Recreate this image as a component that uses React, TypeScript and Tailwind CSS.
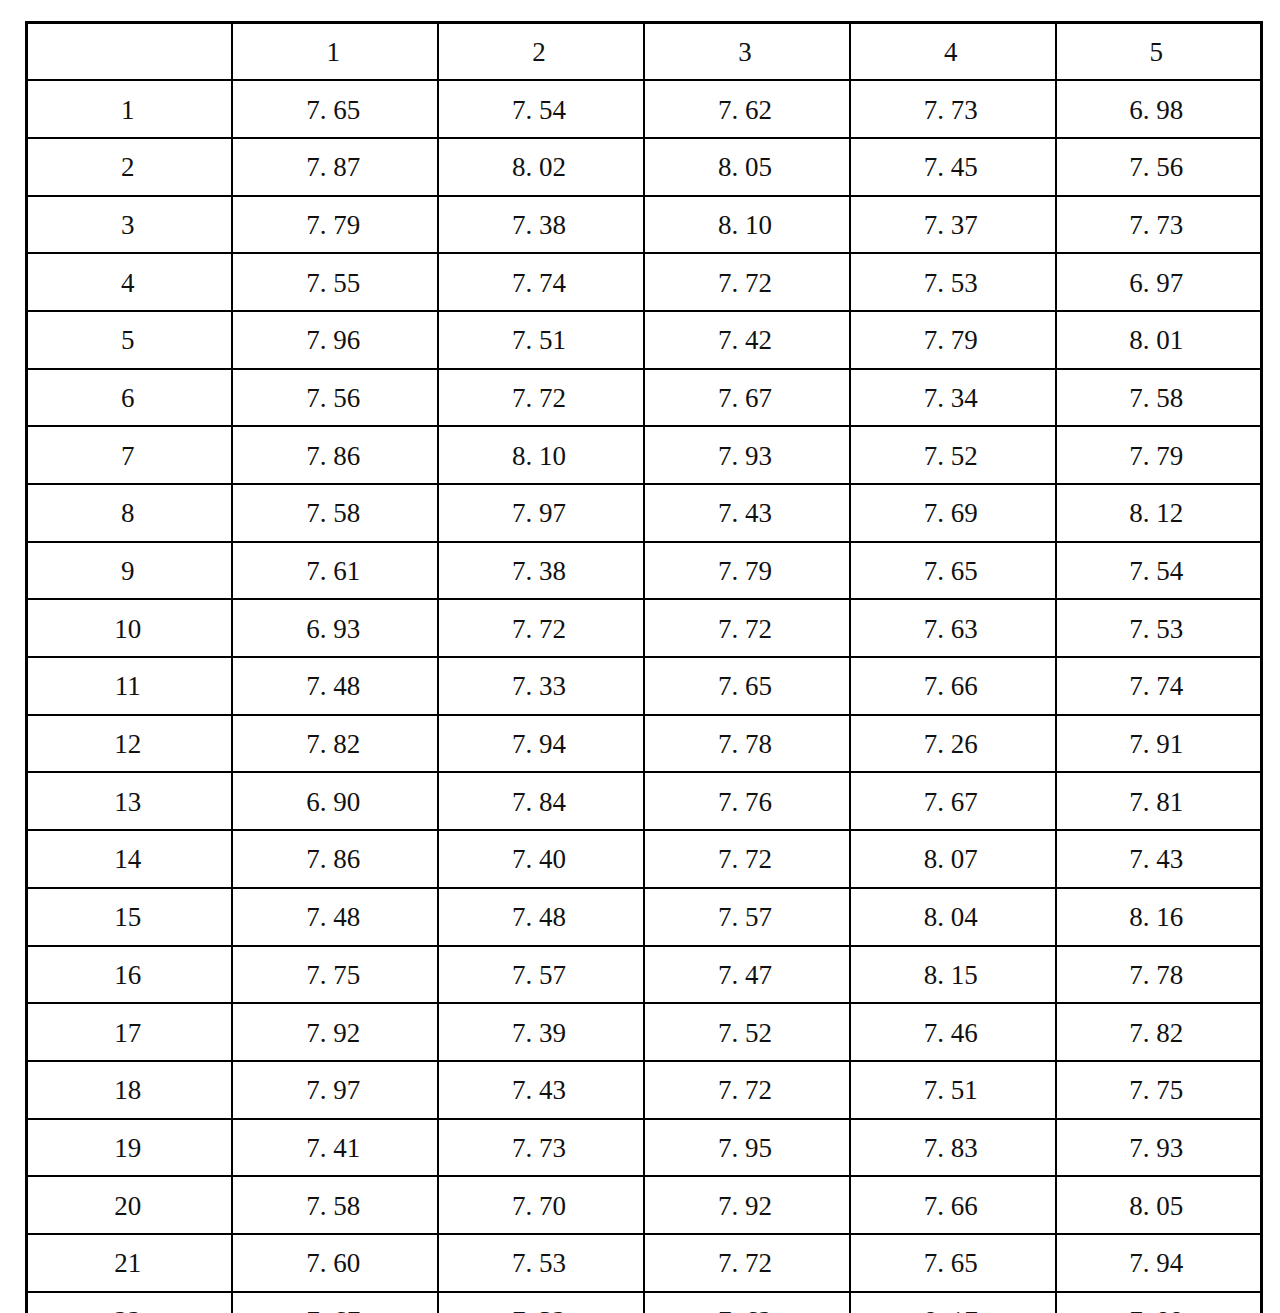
const rows: string[][] = [
  ["1", "7. 65", "7. 54", "7. 62", "7. 73", "6. 98"],
  ["2", "7. 87", "8. 02", "8. 05", "7. 45", "7. 56"],
  ["3", "7. 79", "7. 38", "8. 10", "7. 37", "7. 73"],
  ["4", "7. 55", "7. 74", "7. 72", "7. 53", "6. 97"],
  ["5", "7. 96", "7. 51", "7. 42", "7. 79", "8. 01"],
  ["6", "7. 56", "7. 72", "7. 67", "7. 34", "7. 58"],
  ["7", "7. 86", "8. 10", "7. 93", "7. 52", "7. 79"],
  ["8", "7. 58", "7. 97", "7. 43", "7. 69", "8. 12"],
  ["9", "7. 61", "7. 38", "7. 79", "7. 65", "7. 54"],
  ["10", "6. 93", "7. 72", "7. 72", "7. 63", "7. 53"],
  ["11", "7. 48", "7. 33", "7. 65", "7. 66", "7. 74"],
  ["12", "7. 82", "7. 94", "7. 78", "7. 26", "7. 91"],
  ["13", "6. 90", "7. 84", "7. 76", "7. 67", "7. 81"],
  ["14", "7. 86", "7. 40", "7. 72", "8. 07", "7. 43"],
  ["15", "7. 48", "7. 48", "7. 57", "8. 04", "8. 16"],
  ["16", "7. 75", "7. 57", "7. 47", "8. 15", "7. 78"],
  ["17", "7. 92", "7. 39", "7. 52", "7. 46", "7. 82"],
  ["18", "7. 97", "7. 43", "7. 72", "7. 51", "7. 75"],
  ["19", "7. 41", "7. 73", "7. 95", "7. 83", "7. 93"],
  ["20", "7. 58", "7. 70", "7. 92", "7. 66", "8. 05"],
  ["21", "7. 60", "7. 53", "7. 72", "7. 65", "7. 94"],
  ["22", "7. 67", "7. 32", "7. 62", "8. 17", "7. 88"],
]

const header = ["", "1", "2", "3", "4", "5"]

export default function App() {
  return (
    <div className="h-[1313px] overflow-hidden bg-white pl-[25px] pt-[21px] font-['Liberation_Serif','Times_New_Roman',serif]">
      <table className="w-[1238px] table-fixed border-collapse border-[3px] border-black text-[27px] leading-none text-[#111]">
        <thead>
          <tr>
            {header.map((h, i) => (
              <th key={i} className="h-[57.7px] border-2 border-black pr-1 pt-0.5 text-center font-normal">
                {h}
              </th>
            ))}
          </tr>
        </thead>
        <tbody>
          {rows.map((r) => (
            <tr key={r[0]}>
              {r.map((c, i) => (
                <td key={i} className="h-[57.7px] border-2 border-black pr-1 pt-0.5 text-center">
                  {c}
                </td>
              ))}
            </tr>
          ))}
        </tbody>
      </table>
    </div>
  )
}
